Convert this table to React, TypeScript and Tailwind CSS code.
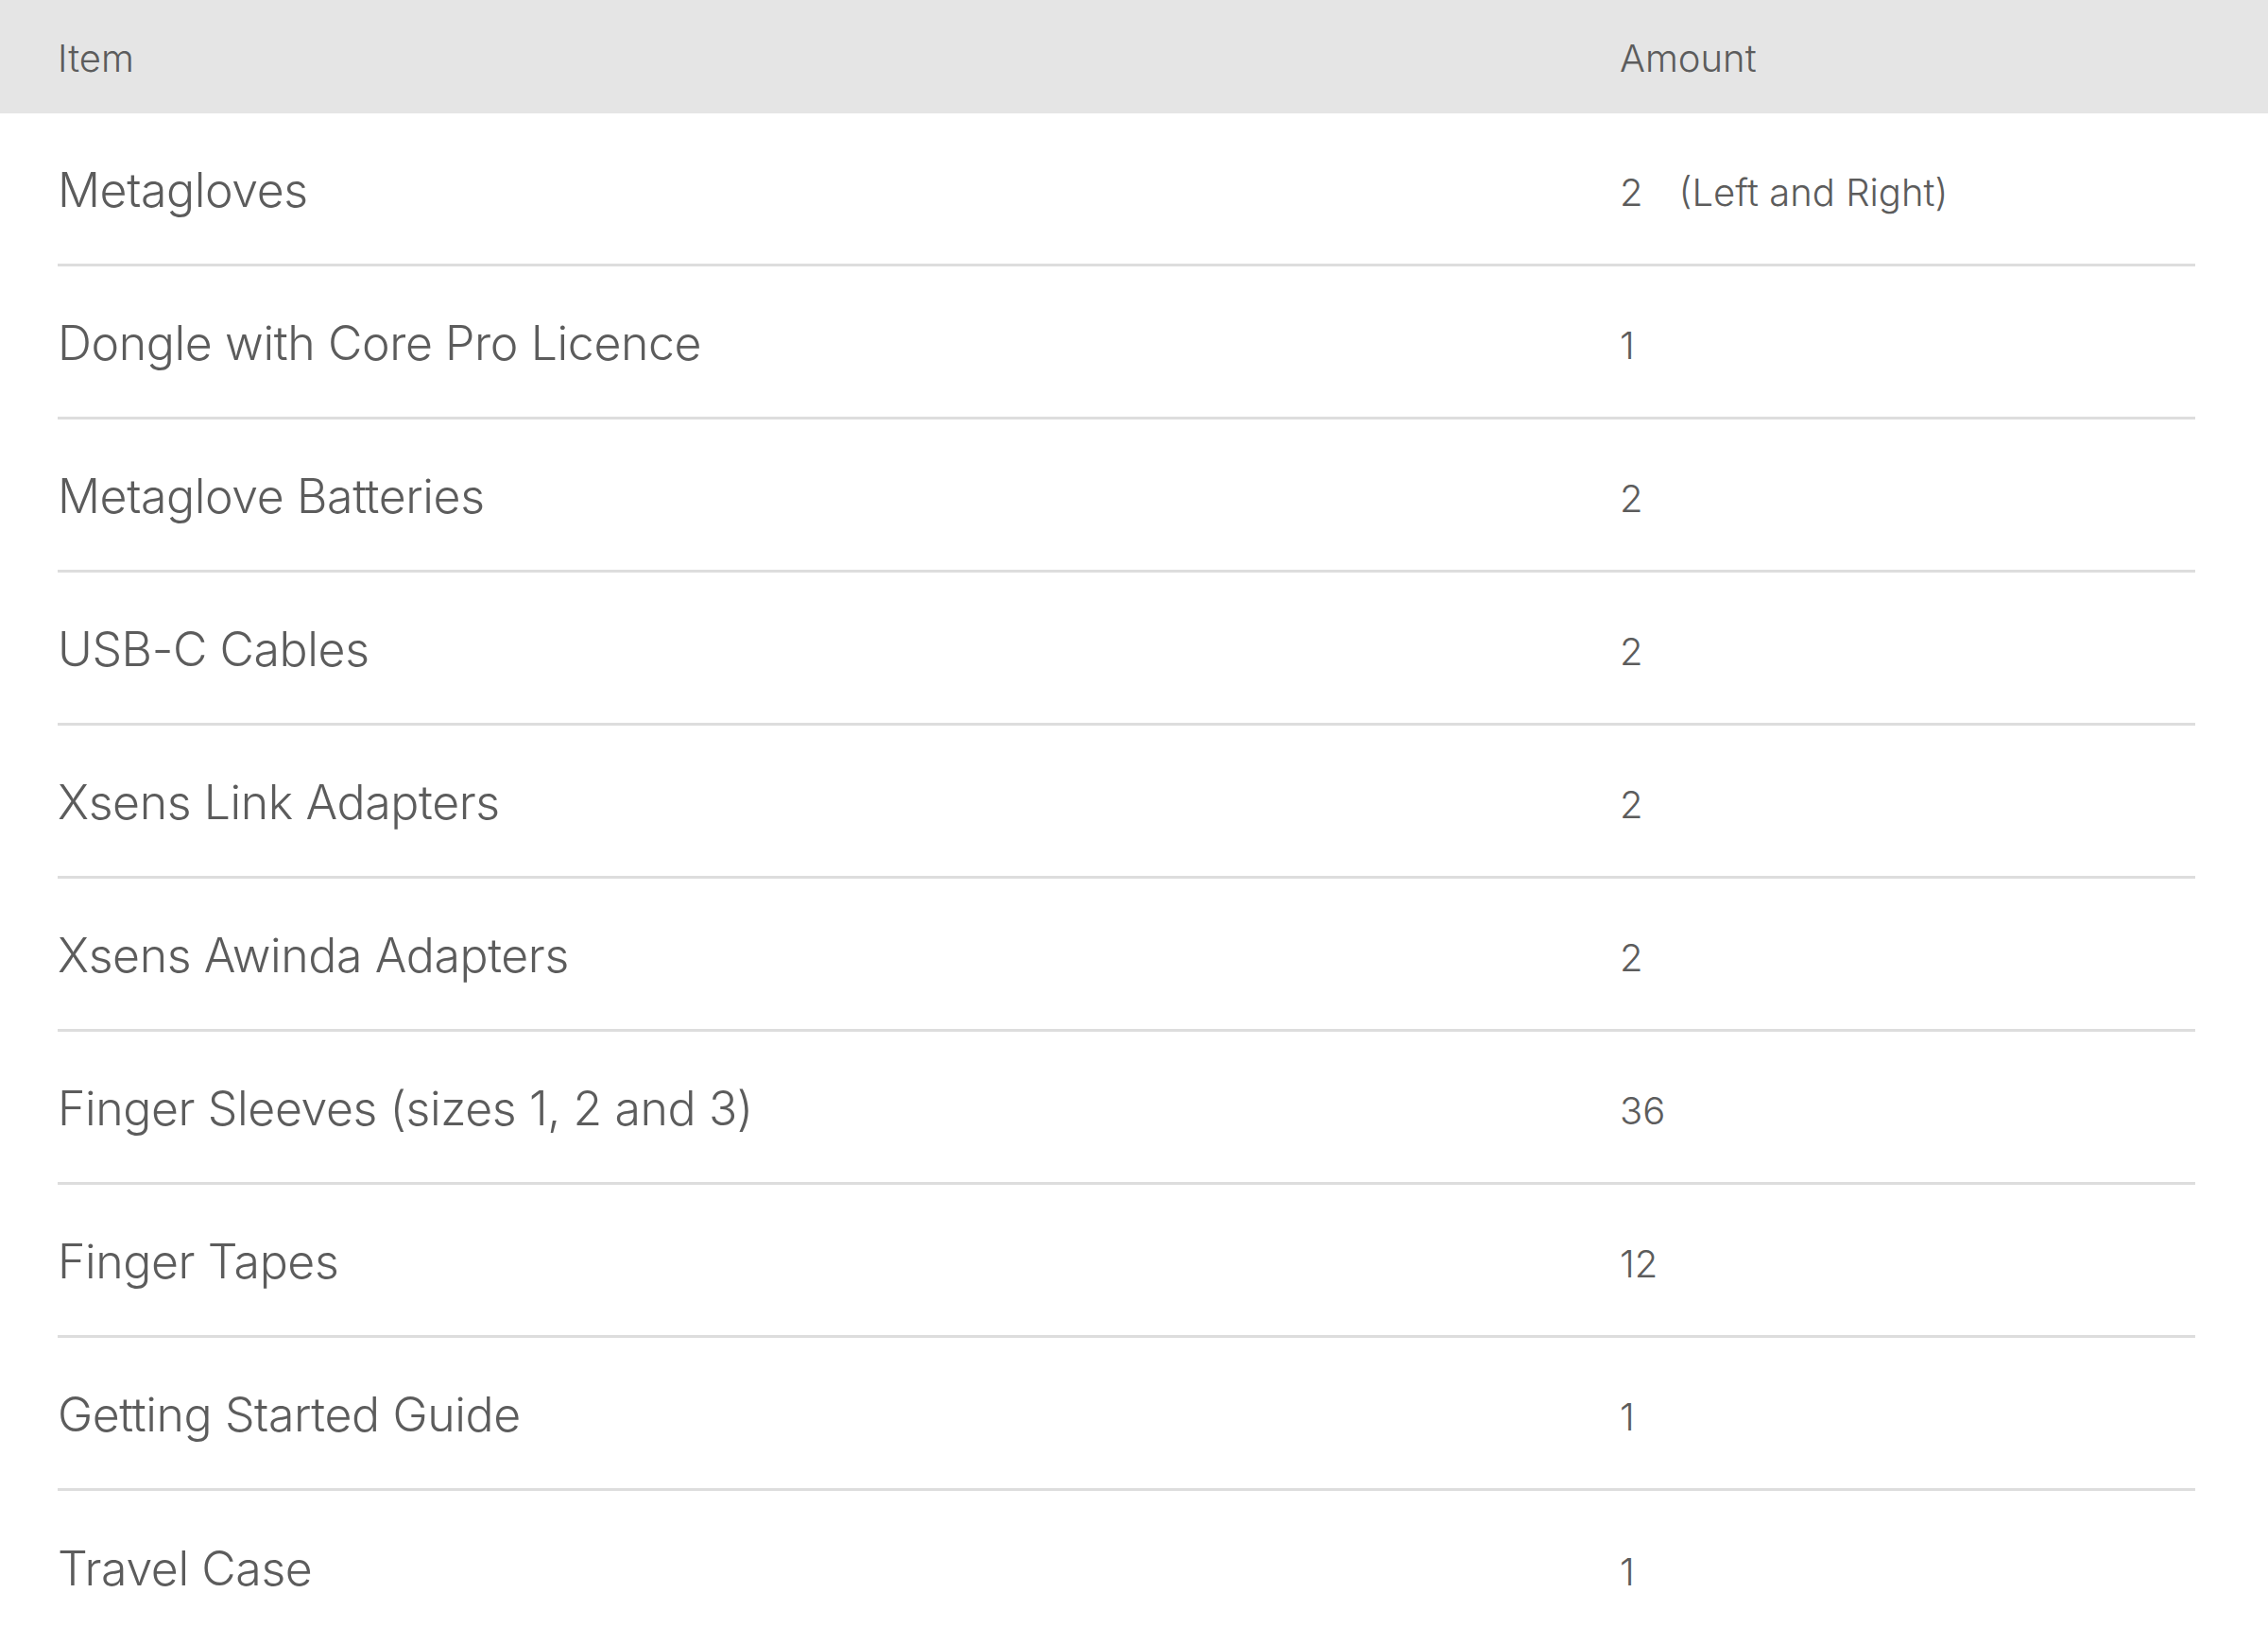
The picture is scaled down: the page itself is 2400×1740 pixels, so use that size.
import React from 'react';

interface Row {
  item: string;
  amount: string;
  note?: string;
}

const rows: Row[] = [
  { item: 'Metagloves', amount: '2', note: '(Left and Right)' },
  { item: 'Dongle with Core Pro Licence', amount: '1' },
  { item: 'Metaglove Batteries', amount: '2' },
  { item: 'USB-C Cables', amount: '2' },
  { item: 'Xsens Link Adapters', amount: '2' },
  { item: 'Xsens Awinda Adapters', amount: '2' },
  { item: 'Finger Sleeves (sizes 1, 2 and 3)', amount: '36' },
  { item: 'Finger Tapes', amount: '12' },
  { item: 'Getting Started Guide', amount: '1' },
  { item: 'Travel Case', amount: '1' },
];

const App: React.FC = () => {
  return (
    <div className="min-h-screen w-full bg-white font-['Inter',_'Liberation_Sans',_sans-serif] font-light text-[#5c5c5c]">
      {/* Header */}
      <div className="grid h-[120px] grid-cols-[1653px_1fr] items-center bg-[#e5e5e5] pl-[61px] pt-[3px] text-[40px]">
        <span>Item</span>
        <span>Amount</span>
      </div>

      {/* Body */}
      <div className="ml-[61px] mr-[77px]">
        {rows.map((row, i) => (
          <div
            key={row.item}
            className={`grid h-[162px] grid-cols-[1653px_1fr] items-center ${
              i < rows.length - 1 ? 'border-b-[3px] border-[#dddddd]' : ''
            }`}
          >
            <span className="pt-[2px] text-[50px] leading-none tracking-[-0.4px]">{row.item}</span>
            <span className="pt-[9px] text-[40px] leading-none">
              {row.amount}
              {row.note && <span className="ml-[38px]">{row.note}</span>}
            </span>
          </div>
        ))}
      </div>
    </div>
  );
};

export default App;
